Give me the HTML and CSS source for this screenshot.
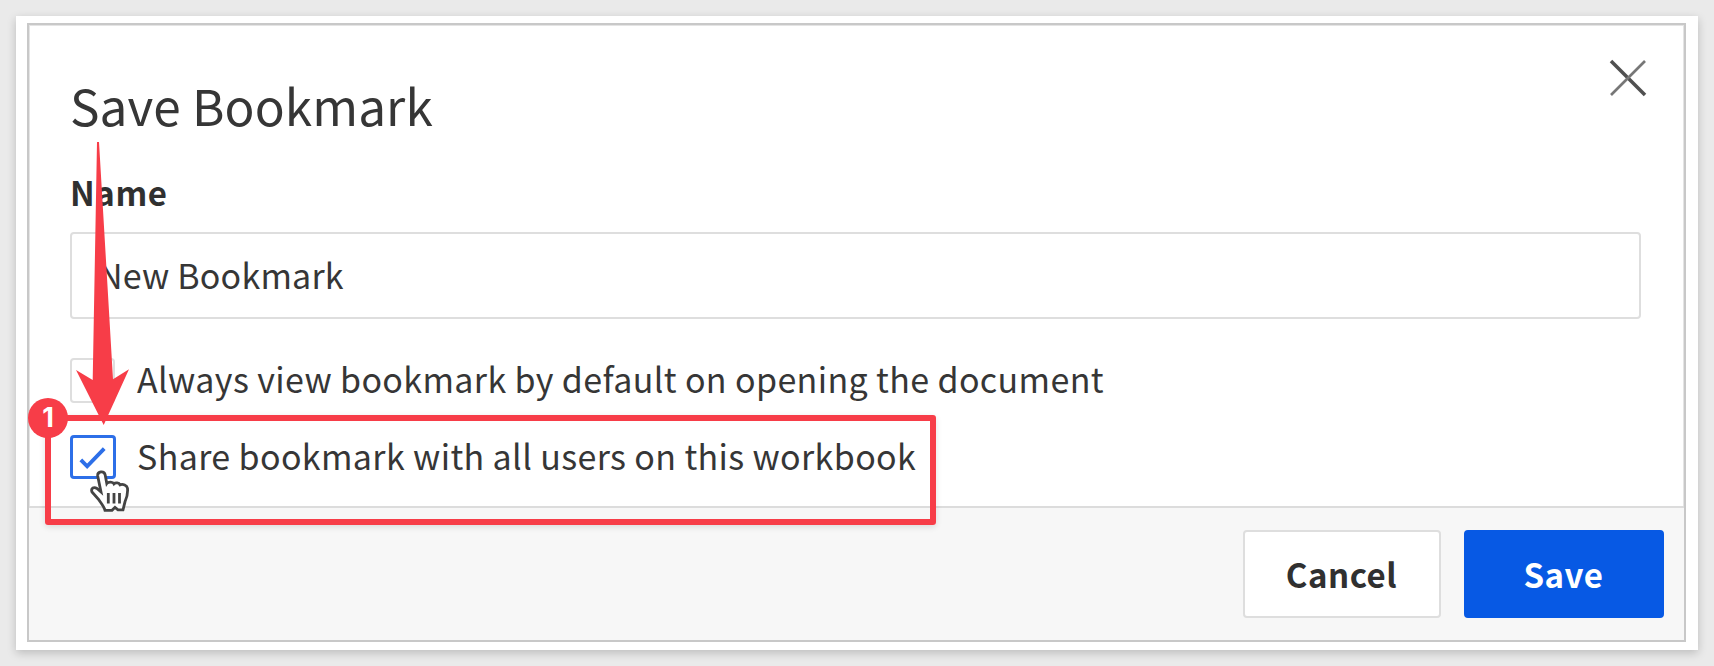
FILE: index.html
```html
<!DOCTYPE html>
<html lang="en">
<head>
<meta charset="utf-8">
<title>Save Bookmark</title>
<link rel="stylesheet" href="styles.css">
</head>
<body>
<main class="card">
  <section class="dialog">
    <div class="content">
      <header class="header">
        <h1 class="title"><span class="t">Save Bookmark</span></h1>
        <svg class="close" viewBox="0 0 40 40"><path d="M3 3 37 37" stroke-width="3.500"/><path d="M37 3 3 37" stroke-width="2.600" stroke="#777"/></svg>
      </header>
      <div class="label"><span class="t">Name</span></div>
      <div class="input"><span class="t">New Bookmark</span></div>
      <div class="option">
        <span class="box"></span>
        <span class="t">Always view bookmark by default on opening the document</span>
      </div>
      <div class="option option-checked">
        <span class="box box-checked"><svg class="tick" viewBox="0 0 42 40"><path d="M8 22.500 14.500 29 32 11"/></svg></span>
        <span class="t">Share bookmark with all users on this workbook</span>
      </div>
    </div>
    <footer class="footer">
      <div class="btn">Cancel</div>
      <div class="btn btn-primary">Save</div>
    </footer>
  </section>
</main>
<div class="highlight"></div>
<svg class="arrow" viewBox="0 0 70 300"><path d="M27 2h2L43 239.300 59 229.300 33.700 285 6 230 22.700 240Z"/></svg>
<div class="badge">1</div>
<svg class="cursor" viewBox="0 0 46 50"><path d="M11.700 10c-.5-5 6.500-5.500 7.500-1l1.600 8.500c1.500-2 6-2 7.200.3 1.500-1.500 5-1 6 1 3-1 7 .5 7.500 3.500.5 5-.5 9-2.500 13.500l-2 8h-5l-3-2.500-3 3h-7c-1-4-4-7-6.500-11L6 26c-1.500-4 2-5.500 5-3.500l4 3.500Z"/><path d="M22.300 27v10.500M28 27v10.500M33.500 27v10.500"/></svg>
</body>
</html>
```
FILE: styles.css
```css
* { box-sizing: border-box; }
body {
  margin: 0;
  height: 666px;
  padding: 16px;
  background: #eaeaea;
  font-family: "Noto Sans CJK JP", "Noto Sans", sans-serif;
  font-size: 34px;
  color: #363636;
  overflow: hidden;
}
.card {
  height: 634px;
  padding: 7px 12px 8px 11px;
  background: #fff;
  box-shadow: 0 3px 9px rgba(0, 0, 0, 0.2);
}
.dialog {
  height: 619px;
  display: flex;
  flex-direction: column;
  border: 2px solid #c8c8c8;
  box-shadow: inset 0 0 0 1px #e4e4e4;
}
.t { white-space: nowrap; }
.content { flex: 1; padding: 35px 43px 0 41px; }
.header { display: flex; justify-content: space-between; height: 96px; }
.title { margin: 8px 0 0; font-size: 49.500px; font-weight: 400; line-height: 74px; letter-spacing: 0.1px; }
.close { width: 40px; height: 40px; margin-right: -7px; margin-top: -2px; fill: none; stroke: #505050; }
.label { height: 76px; font-weight: 700; font-size: 33px; line-height: 72px; letter-spacing: 0.6px; color: #303030; }
.input {
  height: 87px;
  padding-left: 26px;
  border: 2px solid #dedede;
  border-radius: 4px;
  line-height: 82px;
  letter-spacing: 0.2px;
}
.option { display: flex; align-items: center; gap: 22px; margin-top: 38px; height: 46px; line-height: 46px; letter-spacing: 0.370px; }
.option .t { margin-top: -2px; }
.option-checked { margin-top: 31px; }
.box { width: 45px; height: 45px; border: 2px solid #dedede; border-radius: 4px; }
.box-checked { width: 46px; height: 44px; margin-right: -1px; border: 3px solid #2d6fe8; }
.tick { display: block; width: 41px; height: 39px; fill: none; stroke: #2d6fe8; stroke-width: 4; }
.footer {
  height: 134px;
  display: flex;
  justify-content: flex-end;
  gap: 23px;
  padding: 22px 20px 0;
  background: #f7f7f7;
  border-top: 2px solid #dcdcdc;
}
.btn {
  width: 198px;
  height: 88px;
  border: 2px solid #dedede;
  border-radius: 4px;
  background: #fff;
  text-align: center;
  font-weight: 700;
  font-size: 33px;
  line-height: 84px;
  letter-spacing: 0.5px;
  text-indent: -1px;
  color: #303030;
}
.btn-primary { width: 200px; background: #0759e4; border-color: #0759e4; color: #fff; }
.highlight {
  position: absolute;
  left: 45px;
  top: 415px;
  width: 891px;
  height: 110px;
  border: 6px solid #f73d48;
  border-radius: 3px;
  box-shadow: 0 2px 6px rgba(0, 0, 0, 0.12);
}
.arrow { position: absolute; left: 70px; top: 140px; width: 70px; height: 300px; fill: #f73d48; }
.badge {
  position: absolute;
  left: 28px;
  top: 398px;
  width: 40px;
  height: 40px;
  border-radius: 50%;
  background: #f73d48;
  color: #fff;
  text-align: center;
  font: 700 27px/40px Inter, sans-serif;
}
.cursor {
  position: absolute;
  left: 86px;
  top: 466px;
  width: 46px;
  height: 50px;
  fill: #fff;
  stroke: #444;
  stroke-width: 2.800;
}
```
